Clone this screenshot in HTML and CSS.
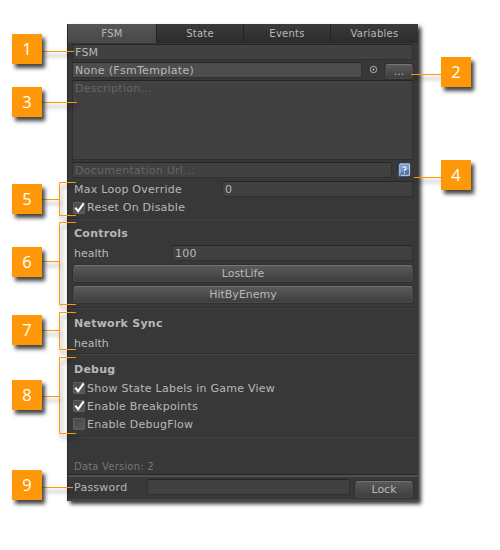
FILE: index.html
```
<!DOCTYPE html>
<html lang="en">
<head>
<meta charset="utf-8">
<title>FSM Inspector</title>
<link rel="stylesheet" href="styles.css">
</head>
<body>
<main class="panel">
  <nav class="tabs"><span class="tab active">FSM</span><span class="tab">State</span><span class="tab">Events</span><span class="tab">Variables</span></nav>
  <section class="overview">
    <div class="field name">FSM</div>
    <div class="row template">
      <div class="field light">None (FsmTemplate)</div>
      <svg class="picker" viewBox="0 0 9 9"><circle cx="4.5" cy="4.5" r="3.2" fill="none" stroke="#b0b0b0"/><circle cx="4.5" cy="4.5" r=".9" fill="#c4c4c4"/></svg>
      <div class="button more">...</div>
    </div>
    <div class="field description">Description...</div>
    <div class="row url">
      <div class="field hint">Documentation Url...</div>
      <svg class="help" viewBox="0 0 14 14"><path d="M0 1 3 0V13L1 12Z" fill="#1d3250"/><path d="M2.5 .5H13V11.5L11.5 13.5H1.5V2Z" fill="#4f75a6"/><path d="M3 .5H13V6L3 10Z" fill="#7698c2"/><path d="M12.6 1V12.3H4" fill="none" stroke="#c5d5e8"/><path d="M2.8 1.2V12.5M3 1H12" fill="none" stroke="#b9cce3"/><path d="M6 5Q6.2 3.5 7.7 3.7T8.9 5.9Q7.6 6.6 7.5 8M7.5 9.2V10.4" fill="none" stroke="#fff" stroke-width="1.1"/></svg>
    </div>
    <div class="row loop"><span class="label">Max Loop Override</span><div class="field">0</div></div>
    <div class="check reset"><svg class="box" viewBox="0 0 13 13"><use href="#tick"/></svg><span>Reset On Disable</span></div>
  </section>
  <section class="controls">
    <h2>Controls</h2>
    <div class="row health"><span class="label">health</span><div class="field">100</div></div>
    <div class="button wide">LostLife</div>
    <div class="button wide">HitByEnemy</div>
  </section>
  <section class="network">
    <h2>Network Sync</h2>
    <div class="label">health</div>
  </section>
  <section class="debug">
    <h2>Debug</h2>
    <div class="check"><svg class="box" viewBox="0 0 13 13"><use href="#tick"/></svg><span>Show State Labels in Game View</span></div>
    <div class="check"><svg class="box" viewBox="0 0 13 13"><use href="#tick"/></svg><span>Enable Breakpoints</span></div>
    <div class="check"><svg class="box" viewBox="0 0 13 13"></svg><span>Enable DebugFlow</span></div>
  </section>
  <section class="version">Data Version: 2</section>
  <footer class="row password"><span class="label">Password</span><div class="field"></div><div class="button lock">Lock</div></footer>
</main>

<svg class="leaders" viewBox="0 0 500 550">
  <defs><path id="tick" d="M2.5 6 5.5 10 11.5 1.5" fill="none" stroke="#fff" stroke-width="2.2"/></defs>
  <path d="M42 51.5H74M42 102.5H77M411 74.5H441M414 177.5H441M42 487.5H73M76 182.5H59.5V215.5H76M42 199.5H59M76 222.5H59.5V304.5H76M42 261.5H59M76 312.5H59.5V349.5H76M42 330.5H59M76 357.5H59.5V433.5H76M42 396.5H59"/>
</svg>
<span class="callout c1">1</span>
<span class="callout c2">2</span>
<span class="callout c3">3</span>
<span class="callout c4">4</span>
<span class="callout c5">5</span>
<span class="callout c6">6</span>
<span class="callout c7">7</span>
<span class="callout c8">8</span>
<span class="callout c9">9</span>
</body>
</html>
```
FILE: styles.css
```
* { box-sizing: border-box; }
body {
  margin: 0;
  width: 500px;
  height: 550px;
  padding: 24px 0 0 67px;
  background: #fff;
  position: relative;
  overflow: hidden;
  font: 11px/16px "DejaVu Sans", sans-serif;
  letter-spacing: .25px;
  color: #b8b8b8;
}
.panel {
  width: 351px;
  height: 477px;
  background: #383838;
  border-left: 1px solid #292929;
  box-shadow: 3px 3px 4px #000c;
  display: flex;
  flex-direction: column;
  white-space: nowrap;
}
.panel > * { flex: none; }
.tabs {
  display: grid;
  grid-template-columns: 89px 87px 87px 87px;
  height: 18px;
  border-bottom: 1px solid #252525;
}
.tab {
  text-align: center;
  line-height: 19px;
  font-size: 10px;
  letter-spacing: .25px;
  background: linear-gradient(#3b3b3b, #2b2b2b);
  border-right: 1px solid #242424;
}
.tab:last-child { border: 0; }
.tab.active { background: linear-gradient(#555, #484848); }
.row { display: flex; }
.field {
  height: 16px;
  padding-left: 2px;
  background: #414141;
  border: 1px solid #303030;
  border-top-color: #252525;
  line-height: 15px;
}
.overview { padding: 2px 5px 0 4px; height: 176px; }
.template { margin-top: 2px; height: 17px; }
.template .field { width: 290px; background: #4d4d4d; letter-spacing: .3px; }
.picker { width: 9px; height: 9px; margin: 3px 7px 0 7px; }
.button {
  text-align: center;
  background: linear-gradient(#5a5a5a, #3e3e3e);
  border: 1px solid #4a4a4a;
  border-top-color: #747474;
  border-radius: 3px;
  box-shadow: 0 0 0 1px #303030;
  letter-spacing: 0;
}
.more { width: 28px; height: 15px; margin-top: 2px; line-height: 14px; }
.description { height: 80px; margin-top: 1px; color: #666; }
.url { margin-top: 2px; }
.hint { width: 320px; color: #666; }
.help { width: 14px; height: 14px; margin: 1px 0 0 5px; }
.loop { margin-top: 3px; padding-left: 2px; }
.loop .label, .password .label { line-height: 17px; }
.loop .label { width: 148px; }
.loop .field { flex: 1; }
.check { display: flex; height: 18px; line-height: 20px; padding-left: 1px; }
.reset { margin-top: 1px; line-height: 18px; }
.box {
  width: 12px;
  height: 12px;
  margin: 3px 2px 0 0;
  border-radius: 2px;
  background: linear-gradient(#494949, #595959);
  box-shadow: inset 0 0 0 1px #606060;
}
h2 { margin: 0 0 0 2px; font-size: 11px; height: 16px; line-height: 18px; letter-spacing: .25px; }
.controls, .network, .debug, .version { border-top: 1px solid #303030; box-shadow: inset 0 1px #434343; padding: 0 5px 0 4px; }
.controls { height: 89px; padding-top: 6px; }
.health { margin: 4px 0; padding-left: 2px; }
.health .label, .network .label { letter-spacing: 0; line-height: 18px; }
.health .label { width: 98px; height: 16px; }
.health .field { flex: 1; }
.wide { height: 17px; line-height: 15px; margin: 0 0 4px 1px; }
.network { height: 46px; padding-top: 7px; }
.network .label { padding: 4px 2px; }
.debug { height: 83px; padding-top: 7px; }
.debug h2 { margin-bottom: 2px; }
.version { height: 39px; padding: 22px 6px 0; font-size: 10px; color: #777; letter-spacing: .2px; }
.password {
  height: 26px;
  padding: 2px 5px 0 6px;
  border-top: 2px solid #505050;
  border-bottom: 2px solid #454545;
  box-shadow: 0 -1px #272727;
}
.password .label { width: 73px; line-height: 18px; }
.password .field { width: 203px; }
.lock { width: 58px; height: 17px; margin: 2px 0 0 5px; line-height: 15px; }
.leaders {
  position: absolute;
  inset: 0;
  width: 500px;
  height: 550px;
  fill: none;
  stroke: #ff9808;
  filter: drop-shadow(2px 4px 2px #0008);
}
.callout {
  position: absolute;
  width: 30px;
  height: 30px;
  left: 12px;
  background: #ff9808;
  color: #fff;
  text-align: center;
  letter-spacing: 0;
  font: 16.5px/29px "Open Sans", sans-serif;
  box-shadow: 3px 4px 4px #000b;
}
.c1 { top: 34px; }
.c2 { left: 441px; top: 57px; }
.c3 { top: 87px; }
.c4 { left: 441px; top: 160px; }
.c5 { top: 184px; }
.c6 { top: 247px; }
.c7 { top: 315px; }
.c8 { top: 380px; }
.c9 { top: 470px; }
```
